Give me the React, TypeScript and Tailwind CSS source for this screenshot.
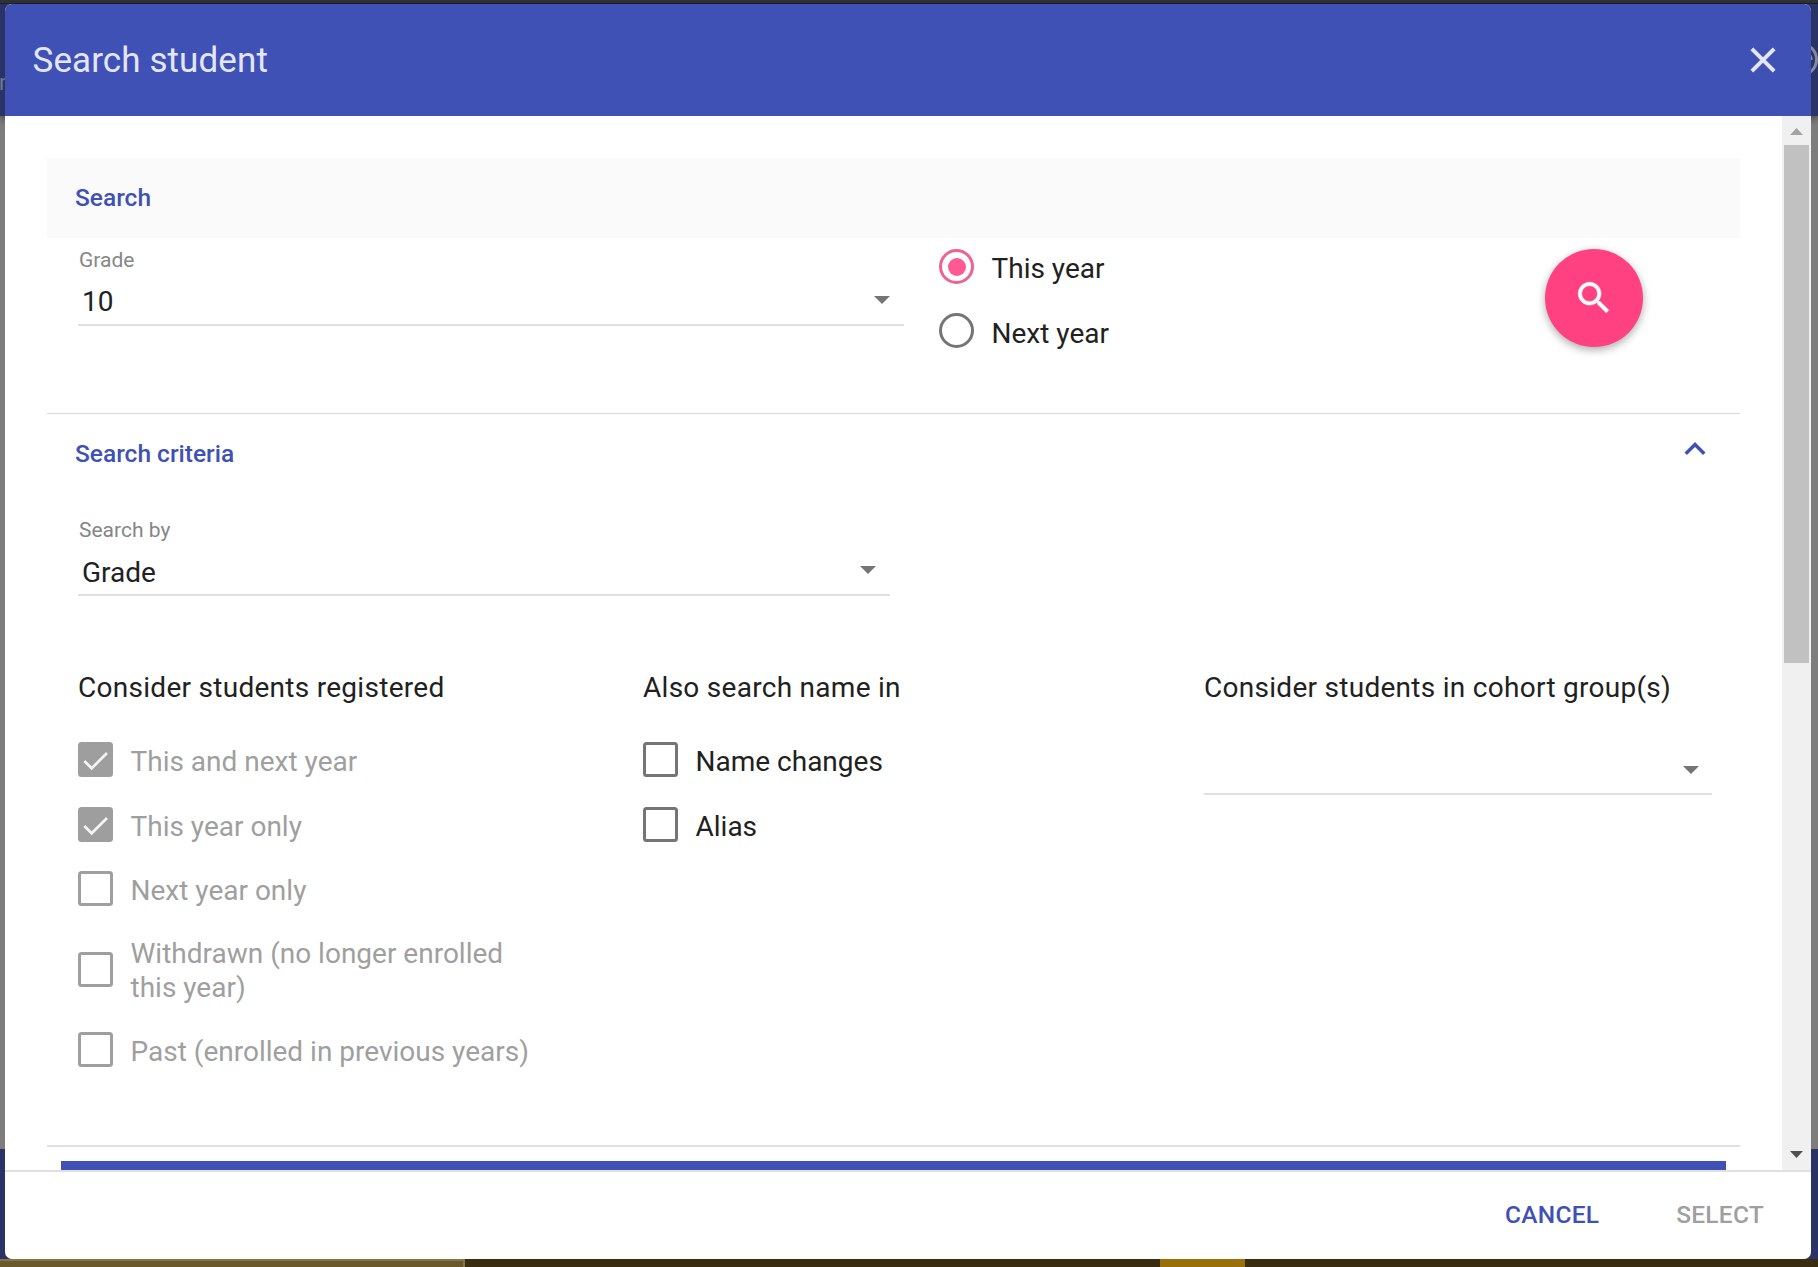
import React from "react";

function Caret({ className = "" }: { className?: string }) {
  return (
    <svg width="16" height="8" viewBox="0 0 16 8" className={`shrink-0 ${className}`}>
      <path d="M0 0h16L8 8z" fill="#757575" />
    </svg>
  );
}

function Checkbox({ label, checked = false, disabled = false }: { label: string; checked?: boolean; disabled?: boolean }) {
  const box = checked
    ? "bg-[#9e9e9e]"
    : disabled
      ? "border-[3px] border-[#9f9f9f]"
      : "border-[3px] border-[#757575]";
  return (
    <label className="flex items-center">
      <span className={`flex h-[35px] w-[35px] shrink-0 items-center justify-center rounded-[3.5px] ${box}`}>
        {checked && (
          <svg width="35" height="35" viewBox="0 0 35 35" fill="none">
            <path d="M6.3 19L13.7 26.3L29 11" stroke="#f4f4f4" strokeWidth="2.7" />
          </svg>
        )}
      </span>
      <span className={`relative top-[2px] ml-[17.5px] leading-[34px] ${disabled ? "text-[#9f9f9f]" : "text-[#212121]"}`}>{label}</span>
    </label>
  );
}

function Radio({ label, checked = false }: { label: string; checked?: boolean }) {
  return (
    <label className="flex h-[35px] items-center">
      <span
        className={`flex h-[35px] w-[35px] items-center justify-center rounded-full border-[3px] ${checked ? "border-[#f06292]" : "border-[#757575]"}`}
      >
        {checked && <span className="h-[18px] w-[18px] rounded-full bg-[#ff5991]" />}
      </span>
      <span className={`relative ml-[17.5px] leading-[34px] text-[#212121] ${checked ? "top-[2px]" : "top-[3px]"}`}>{label}</span>
    </label>
  );
}

function Select({ label, value, className, valueClass = "mt-[2px]" }: { label: string; value: string; className: string; valueClass?: string }) {
  return (
    <div className={`border-b-2 border-[#e0e0e0] ${className}`}>
      <div className="ml-px h-[26px] text-[21px] leading-[28px] text-[#868686]">{label}</div>
      <div className="mt-[11px] flex h-[41px] justify-between pr-[14px] pl-1">
        <span className={`leading-[34px] text-[#212121] ${valueClass}`}>{value}</span>
        <Caret className="mt-[13px]" />
      </div>
    </div>
  );
}

export default function App() {
  return (
    <div className="relative h-[1267px] w-[1818px] overflow-hidden bg-[#7d7d7d] font-['Roboto',sans-serif] text-[28px]">
      {/* dimmed page behind the dialog */}
      <div className="absolute inset-0 flex flex-col">
        <div className="h-[4px] border-b border-[#222428] bg-[#323437]" />
        <div className="relative h-[112px] bg-[#2a3365] shadow-[0_2px_8px_rgba(0,0,0,0.5)]">
          <span className="absolute top-[66px] -left-[1px] text-[22px] leading-[26px] text-[#74788f]">m</span>
          <svg width="35" height="35" viewBox="0 0 35 35" fill="none" className="absolute top-[38px] left-[1783px]">
            <circle cx="17.500" cy="17.500" r="16" stroke="#85899f" strokeWidth="3" />
            <path d="M24 12a5 5 0 0 1 4 6" stroke="#85899f" strokeWidth="3" />
          </svg>
        </div>
        <div className="grow" />
        <div className="h-[110px] bg-[#2a3365]" />
        <div className="flex h-[8px] bg-[#3a2c11]">
          <div className="w-[465px] border-t-2 border-r-2 border-[#85754c] bg-[#6b592c]" />
          <div className="ml-[695px] w-[85px] bg-[#996f0a]" />
        </div>
      </div>

      <div className="absolute top-[4px] left-[5px] flex h-[1255px] w-[1806px] flex-col overflow-hidden rounded-[7px] bg-white">
        <header className="flex h-[112px] shrink-0 items-center justify-between bg-[#3f51b5] pr-[27.5px] pl-[27.5px]">
          <h2 className="mt-[2px] text-[35px] leading-[42px] tracking-[0.1px] text-[#e3e6fb]">Search student</h2>
          <svg width="42" height="42" viewBox="0 0 24 24" fill="#e6e8fc" stroke="#e6e8fc" strokeWidth="0.3">
            <path d="M19 6.41L17.59 5 12 10.59 6.41 5 5 6.41 10.59 12 5 17.59 6.41 19 12 13.41 17.59 19 19 17.59 13.41 12z" />
          </svg>
        </header>

        <div className="flex h-[1054px] shrink-0 overflow-hidden">
          <main className="grow pt-[42px] pl-[42px]">
            <div className="w-[1693px]">
              <div className="flex h-[80px] items-center bg-[#fafafa] pl-[28px] text-[24.5px] font-medium text-[#3f51b5]">
                Search
              </div>
              <section className="flex h-[176px] border-b border-[#d9d9d9]">
                <Select label="Grade" value="10" className="mt-[8px] ml-[31px] h-[80px] w-[826px]" />
                <div className="mt-[11px] ml-[35px] flex grow flex-col gap-[29px]">
                  <Radio label="This year" checked />
                  <Radio label="Next year" />
                </div>
                <button className="mt-[11px] mr-[97px] flex h-[98px] w-[98px] items-center justify-center rounded-full bg-[#ff4081] shadow-[0_3px_8px_rgba(0,0,0,0.33)]">
                  <svg width="42" height="42" viewBox="0 0 24 24" fill="#fff" stroke="#fff" strokeWidth="0.3">
                    <path d="M15.5 14h-.79l-.28-.27C15.41 12.59 16 11.11 16 9.5 16 5.91 13.09 3 9.5 3S3 5.91 3 9.5 5.91 16 9.5 16c1.61 0 3.09-.59 4.23-1.57l.27.28v.79l5 4.99L20.49 19l-4.99-5zm-6 0C7.01 14 5 11.99 5 9.5S7.01 5 9.5 5 14 7.01 14 9.5 11.99 14 9.5 14z" />
                  </svg>
                </button>
              </section>

              <section className="h-[733px] border-b-2 border-[#e0e0e0]">
                <div className="flex h-[80px] items-center justify-between pr-[24px] pl-[28px] text-[24.5px] font-medium text-[#3f51b5]">
                  Search criteria
                  <svg width="42" height="42" viewBox="0 0 24 24" fill="#3f51b5" className="mb-[10px]">
                    <path d="M12 8l-6 6 1.41 1.41L12 10.83l4.59 4.58L18 14z" />
                  </svg>
                </div>
                <Select label="Search by" value="Grade" className="mt-[22px] ml-[31px] h-[80px] w-[812px]" valueClass="mt-[3px]" />

                <div className="mt-[75px] ml-[31px] flex text-[#212121]">
                  <div className="w-[565px]">
                    <h3 className="h-[34px] leading-[34px] tracking-[0.01em]">Consider students registered</h3>
                    <div className="mt-[37px] flex w-[470px] flex-col">
                      <Checkbox label="This and next year" checked disabled />
                      <div className="h-[30px]" />
                      <Checkbox label="This year only" checked disabled />
                      <div className="h-[29px]" />
                      <Checkbox label="Next year only" disabled />
                      <div className="h-[29px]" />
                      <Checkbox label="Withdrawn (no longer enrolled this year)" disabled />
                      <div className="h-[29px]" />
                      <Checkbox label="Past (enrolled in previous years)" disabled />
                    </div>
                  </div>
                  <div className="w-[561px]">
                    <h3 className="h-[34px] leading-[34px] tracking-[0.01em]">Also search name in</h3>
                    <div className="mt-[37px] flex flex-col gap-[30px]">
                      <Checkbox label="Name changes" />
                      <Checkbox label="Alias" />
                    </div>
                  </div>
                  <div className="w-[508px]">
                    <h3 className="h-[34px] leading-[34px] tracking-[0.01em] whitespace-nowrap">Consider students in cohort group(s)</h3>
                    <div className="mt-[43px] flex h-[47px] justify-end border-b-2 border-[#e0e0e0] pt-[18px] pr-[13px]">
                      <Caret />
                    </div>
                  </div>
                </div>
              </section>
              <div className="mx-[14px] mt-[14px] h-[60px] bg-[#3f51b5]" />
            </div>
          </main>

          <div className="flex w-[29px] shrink-0 flex-col items-center bg-[#f0f0f0]">
            <svg width="29" height="29" viewBox="0 0 29 29">
              <path d="M8 19h13l-6.500-7z" fill="#a3a3a3" />
            </svg>
            <div className="h-[518px] w-[25px] bg-[#c1c1c1]" />
            <div className="grow" />
            <svg width="29" height="29" viewBox="0 0 29 29">
              <path d="M8 10h13l-6.500 7z" fill="#505050" />
            </svg>
          </div>
        </div>

        <footer className="flex grow items-center justify-end border-t-2 border-[#e0e0e0] pr-[47px] text-[24.5px] font-medium tracking-[0.01em]">
          <button className="text-[#3f51b5]">CANCEL</button>
          <button className="ml-[77px] text-[#9f9f9f]">SELECT</button>
        </footer>
      </div>
    </div>
  );
}
